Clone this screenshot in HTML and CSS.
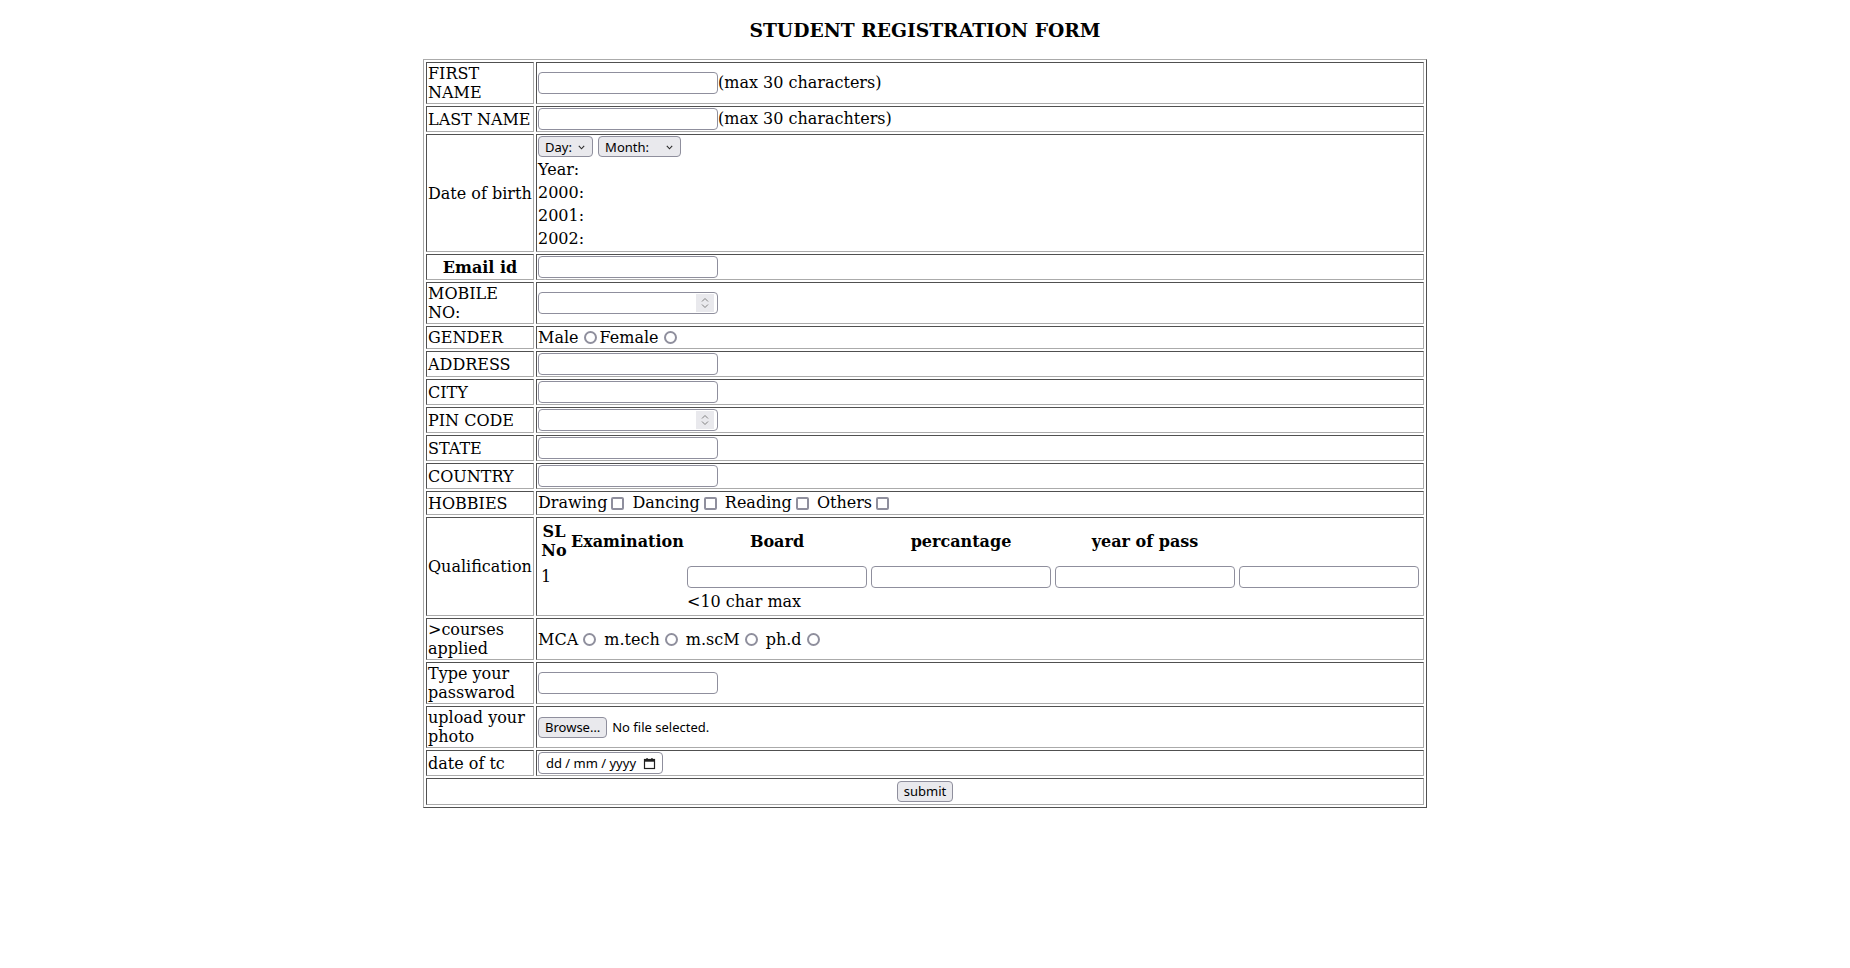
FILE: index.html
```html
<!DOCTYPE html>
<html lang="en">
<head>
<meta charset="utf-8">
<title>Student Registration Form</title>
<link rel="stylesheet" href="styles.css">
</head>
<body>
<h3 class="title">STUDENT REGISTRATION FORM</h3>
<form class="form">
<table class="reg">
  <tr>
    <td class="lbl">FIRST NAME</td>
    <td class="val"><input class="txt" type="text" maxlength="30">(max 30 characters)</td>
  </tr>
  <tr>
    <td class="lbl">LAST NAME</td>
    <td class="val"><input class="txt" type="text" maxlength="30">(max 30 charachters)</td>
  </tr>
  <tr>
    <td class="lbl">Date of birth</td>
    <td class="val"><span class="sel"><select class="day"><option>Day:</option></select><svg class="chev" viewBox="0 0 7 5"><polyline points="0.8,0.8 3.5,3.8 6.2,0.8" fill="none" stroke="#2b2b2b" stroke-width="1.1"/></svg></span> <span class="sel"><select class="month"><option>Month:</option></select><svg class="chev" viewBox="0 0 7 5"><polyline points="0.8,0.8 3.5,3.8 6.2,0.8" fill="none" stroke="#2b2b2b" stroke-width="1.1"/></svg></span>
      <div class="opt">Year:</div>
      <div class="opt">2000:</div>
      <div class="opt">2001:</div>
      <div class="opt">2002:</div>
    </td>
  </tr>
  <tr>
    <th class="lbl">Email id</th>
    <td class="val"><input class="txt" type="email"></td>
  </tr>
  <tr>
    <td class="lbl">MOBILE NO:</td>
    <td class="val"><span class="num"><input type="text" inputmode="numeric"><span class="spin"><svg viewBox="0 0 8 14" width="8" height="14"><polyline points="1,5.5 4,2.5 7,5.5" fill="none" stroke="#808080" stroke-width="1"/><polyline points="1,8.5 4,11.5 7,8.5" fill="none" stroke="#808080" stroke-width="1"/></svg></span></span></td>
  </tr>
  <tr>
    <td class="lbl">GENDER</td>
    <td class="val">Male<input class="rad" type="radio" name="gender">Female<input class="rad" type="radio" name="gender"></td>
  </tr>
  <tr>
    <td class="lbl">ADDRESS</td>
    <td class="val"><input class="txt" type="text"></td>
  </tr>
  <tr>
    <td class="lbl">CITY</td>
    <td class="val"><input class="txt" type="text"></td>
  </tr>
  <tr>
    <td class="lbl">PIN CODE</td>
    <td class="val"><span class="num"><input type="text" inputmode="numeric"><span class="spin"><svg viewBox="0 0 8 14" width="8" height="14"><polyline points="1,5.5 4,2.5 7,5.5" fill="none" stroke="#808080" stroke-width="1"/><polyline points="1,8.5 4,11.5 7,8.5" fill="none" stroke="#808080" stroke-width="1"/></svg></span></span></td>
  </tr>
  <tr>
    <td class="lbl">STATE</td>
    <td class="val"><input class="txt" type="text"></td>
  </tr>
  <tr>
    <td class="lbl">COUNTRY</td>
    <td class="val"><input class="txt" type="text"></td>
  </tr>
  <tr>
    <td class="lbl">HOBBIES</td>
    <td class="val">Drawing<input class="chk" type="checkbox"> Dancing<input class="chk" type="checkbox"> Reading<input class="chk" type="checkbox"> Others<input class="chk" type="checkbox"></td>
  </tr>
  <tr>
    <td class="lbl">Qualification</td>
    <td class="val">
      <table class="qual">
        <tr class="qh">
          <th class="c-sl">SL No</th>
          <th class="c-ex">Examination</th>
          <th class="c-in">Board</th>
          <th class="c-in">percantage</th>
          <th class="c-in">year of pass</th>
          <th class="c-in"></th>
        </tr>
        <tr class="qr">
          <td>1</td>
          <td></td>
          <td><input class="txt" type="text" maxlength="10"><br>&lt;10 char max</td>
          <td><input class="txt" type="text"></td>
          <td><input class="txt" type="text"></td>
          <td><input class="txt" type="text"></td>
        </tr>
      </table>
    </td>
  </tr>
  <tr>
    <td class="lbl">&gt;courses applied</td>
    <td class="val">MCA<input class="rad" type="radio" name="course"> m.tech<input class="rad" type="radio" name="course"> m.scM<input class="rad" type="radio" name="course"> ph.d<input class="rad" type="radio" name="course"></td>
  </tr>
  <tr>
    <td class="lbl">Type your passwarod</td>
    <td class="val"><input class="txt" type="password"></td>
  </tr>
  <tr>
    <td class="lbl">upload your photo</td>
    <td class="val"><button class="btn" type="button">Browse…</button><span class="ftxt">No file selected.</span></td>
  </tr>
  <tr>
    <td class="lbl">date of tc</td>
    <td class="val"><span class="date"><span class="dtxt">dd / mm / yyyy</span><svg class="cal" viewBox="0 0 13 13" width="13" height="13"><rect x="1.5" y="2.5" width="10" height="9" fill="none" stroke="#1f1f1f" stroke-width="1.2"/><rect x="1.5" y="2.5" width="10" height="2.2" fill="#1f1f1f"/><rect x="3.4" y="1" width="1.3" height="2" fill="#1f1f1f"/><rect x="8.3" y="1" width="1.3" height="2" fill="#1f1f1f"/></svg></span></td>
  </tr>
  <tr>
    <td class="val center" colspan="2"><input class="btn submit" type="submit" value="submit"></td>
  </tr>
</table>
</form>
</body>
</html>
```

FILE: styles.css
```css
html, body {
  background: #ffffff;
}

body {
  margin: 8px;
  font-family: "DejaVu Serif", serif;
  font-size: 16px;
  line-height: 19px;
  color: #000000;
}

.title {
  margin: 10.72px 0 18.72px;
  font-size: 18.72px;
  line-height: normal;
  font-weight: bold;
  text-align: center;
}

.form {
  margin: 0;
}

.reg {
  width: 1004px;
  margin: 0 auto;
  table-layout: fixed;
  border-collapse: separate;
  border-spacing: 2px;
  border: 1px solid;
  border-color: #ababab #505050 #505050 #ababab;
}

.reg > tbody > tr > td,
.reg > tbody > tr > th {
  border: 1px solid;
  border-color: #505050 #ababab #ababab #505050;
  padding: 1px;
  vertical-align: middle;
}

.lbl {
  width: 104px;
  text-align: left;
}

th.lbl {
  text-align: center;
  font-weight: bold;
}

.center {
  text-align: center;
}

/* text inputs */
.txt {
  box-sizing: border-box;
  width: 180px;
  height: 22px;
  margin: 0;
  padding: 0 3px;
  border: 1px solid #8f8f9d;
  border-radius: 4px;
  background: #ffffff;
  font-family: "Noto Sans", sans-serif;
  font-size: 13px;
  line-height: normal;
  color: #000;
  vertical-align: baseline;
}

/* number input lookalike */
.num {
  display: inline-flex;
  box-sizing: border-box;
  width: 180px;
  height: 22px;
  border: 1px solid #8f8f9d;
  border-radius: 4px;
  background: #ffffff;
  vertical-align: baseline;
}

.num input {
  flex: 1;
  min-width: 0;
  margin: 0;
  padding: 0 3px;
  border: 0;
  outline: none;
  background: transparent;
  font-family: "Noto Sans", sans-serif;
  font-size: 13px;
  line-height: normal;
}

.spin {
  display: flex;
  align-items: center;
  justify-content: center;
  width: 18px;
  margin: 1px 3px 1px 0;
  background: #e9e9ed;
}

/* selects */
.sel {
  position: relative;
  display: inline-block;
  vertical-align: top;
  margin-bottom: 1px;
}

.sel select {
  -webkit-appearance: none;
  appearance: none;
  box-sizing: border-box;
  display: block;
  height: 21px;
  margin: 0;
  padding: 0 18px 0 6px;
  border: 1px solid #8f8f9d;
  border-radius: 4px;
  background: #e9e9ed;
  color: #000;
  font-family: "Noto Sans", sans-serif;
  font-size: 13px;
  line-height: normal;
}

.sel .day {
  width: 55px;
}

.sel .month {
  width: 83px;
}

.chev {
  position: absolute;
  right: 8px;
  top: 9px;
  width: 7px;
  height: 5px;
  pointer-events: none;
}

.opt {
  padding: 2px 0;
}

/* radio & checkbox */
.rad {
  -webkit-appearance: none;
  appearance: none;
  box-sizing: border-box;
  width: 13px;
  height: 13px;
  margin: 3px 3px 0 5px;
  border: 2px solid #8f8f9d;
  border-radius: 50%;
  background: #ffffff;
  vertical-align: -1px;
}

.chk {
  -webkit-appearance: none;
  appearance: none;
  box-sizing: border-box;
  width: 13px;
  height: 13px;
  margin: 3px 3px 3px 4px;
  border: 2px solid #8f8f9d;
  border-radius: 2px;
  background: #ffffff;
  vertical-align: -5px;
}

/* qualification sub table */
.qual {
  width: 100%;
  table-layout: fixed;
  border-collapse: separate;
  border-spacing: 2px;
  border: 0;
}

.qual th,
.qual td {
  padding: 1px;
  border: 0;
}

.qual .qh th {
  vertical-align: middle;
  text-align: center;
}

.qual .qr td {
  vertical-align: baseline;
  text-align: left;
}

.qual .qr .txt {
  margin: 2px 0 4px;
}

.qual .c-sl {
  width: 26px;
}

.qual .c-ex {
  width: 112px;
}

.qual .c-in {
  width: 180px;
}

/* buttons */
.btn {
  -webkit-appearance: none;
  appearance: none;
  box-sizing: border-box;
  height: 21px;
  margin: 0;
  padding: 0 6px;
  border: 1px solid #8f8f9d;
  border-radius: 4px;
  background: #e9e9ed;
  color: #000;
  font-family: "Noto Sans", sans-serif;
  font-size: 13px;
  line-height: 17px;
}

.submit {
  margin: 1px 0;
}

.ftxt {
  margin-left: 5px;
  font-family: "Noto Sans", sans-serif;
  font-size: 13px;
}

/* date lookalike */
.date {
  display: inline-flex;
  align-items: center;
  box-sizing: border-box;
  width: 125px;
  height: 22px;
  padding: 0 6px 0 7px;
  border: 1px solid #8f8f9d;
  border-radius: 4px;
  background: #ffffff;
  font-family: "Noto Sans", sans-serif;
  font-size: 13px;
  vertical-align: baseline;
}

.dtxt {
  flex: 1;
  white-space: nowrap;
}

.cal {
  flex: none;
}
```
